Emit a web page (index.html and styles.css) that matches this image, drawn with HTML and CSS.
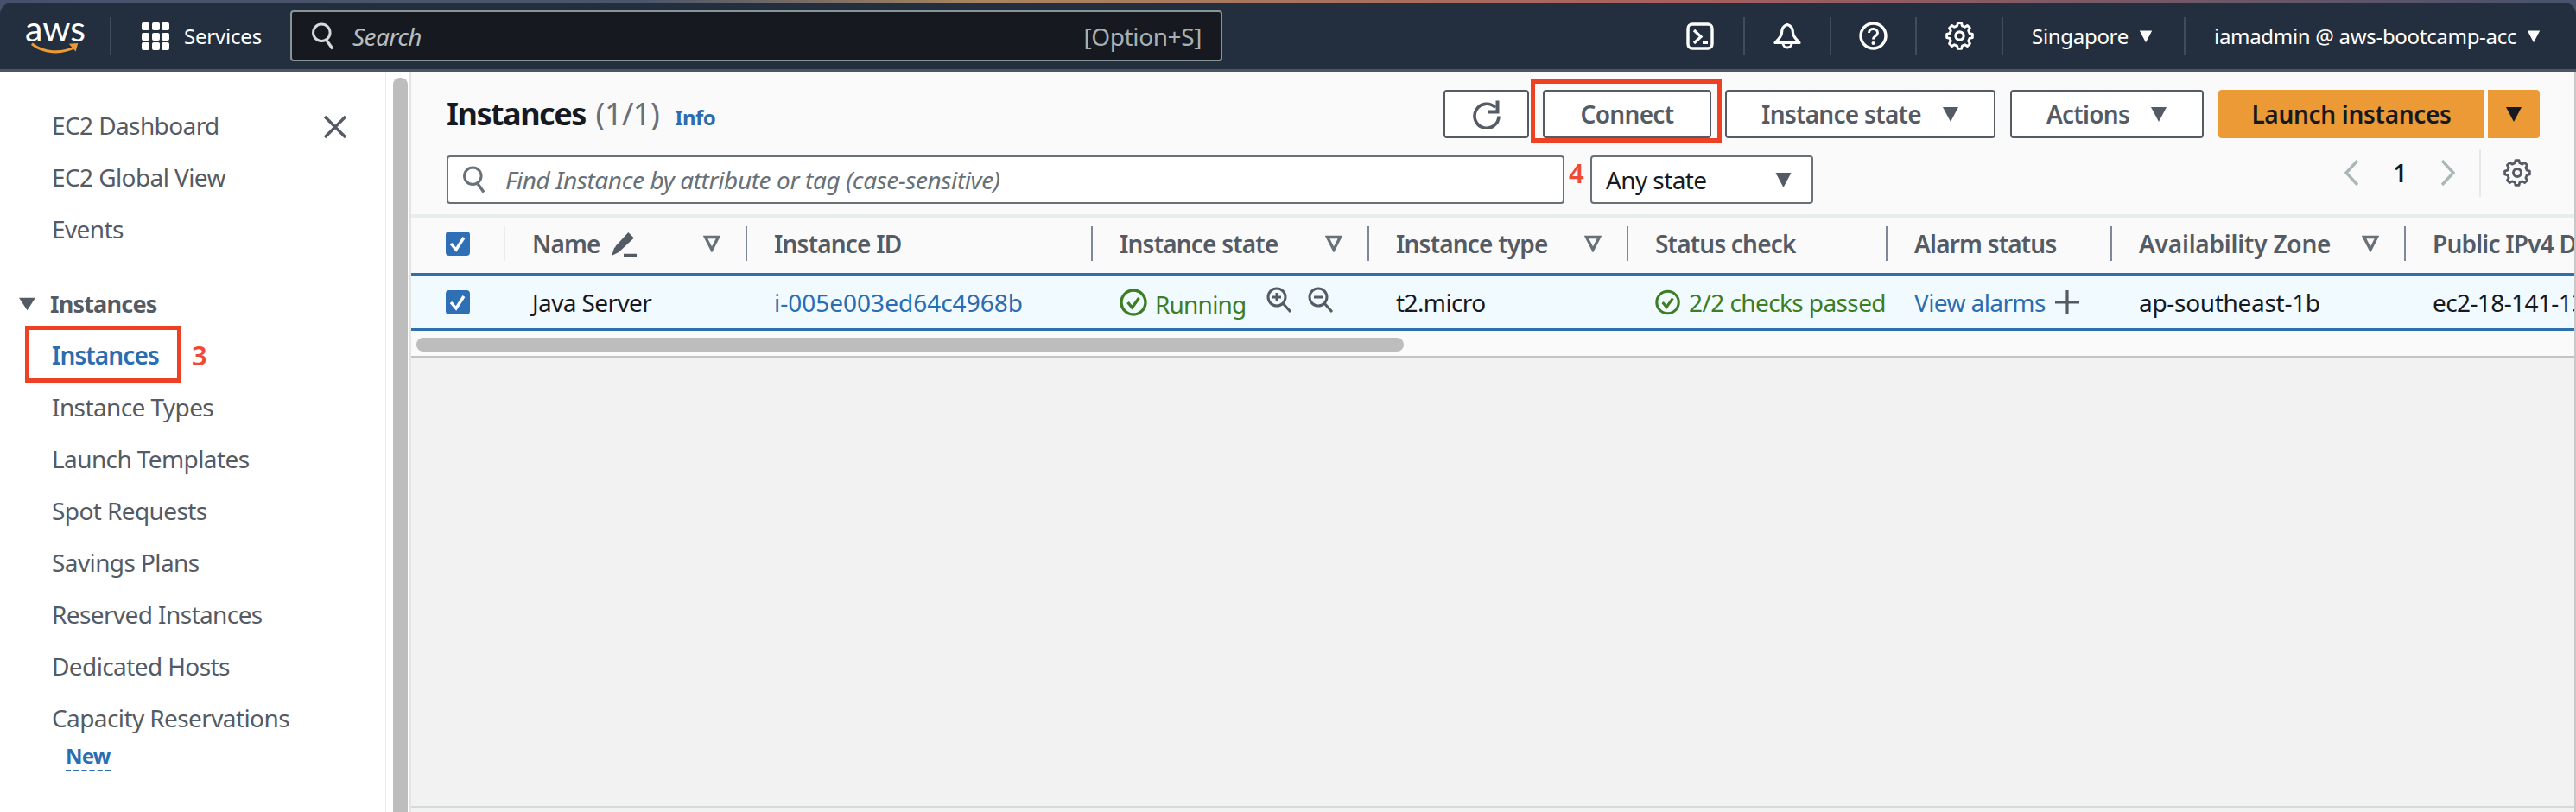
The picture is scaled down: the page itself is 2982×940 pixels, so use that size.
FILE: index.html
```html
<!DOCTYPE html>
<html lang="en">
<head>
    <meta charset="UTF-8">
    <title>Instances | EC2 Management Console</title>
    <link rel="stylesheet" href="styles.css">
</head>
<body>
    <svg class="defs" width="0" height="0">
        <symbol id="i-search" viewBox="0 0 32 40">
            <circle cx="14" cy="15" r="11.5" fill="none" stroke="currentColor" stroke-width="3.5"/>
            <path d="M21 26l8 11" fill="none" stroke="currentColor" stroke-width="4"/>
        </symbol>
        <symbol id="i-gear" viewBox="0 0 32 32">
            <path d="M13.2 4.800L14 1.600H18L18.800 4.800L21.900 6.100L24.700 4.400L27.600 7.300L25.900 10.100L27.200 13.200L30.400 14V18L27.200 18.800L25.900 21.900L27.600 24.700L24.700 27.600L21.900 25.900L18.800 27.200L18 30.400H14L13.200 27.200L10.100 25.900L7.300 27.600L4.400 24.700L6.100 21.900L4.800 18.800L1.600 18V14L4.800 13.200L6.100 10.100L4.400 7.300L7.300 4.400L10.100 6.100Z" fill="none" stroke="currentColor" stroke-width="2.800" stroke-linejoin="round"/>
            <circle cx="16" cy="16" r="4.500" fill="none" stroke="currentColor" stroke-width="3"/>
        </symbol>
        <symbol id="i-caret" viewBox="0 0 20 20"><path d="M1 2h18L10 19z" fill="currentColor"/></symbol>
        <symbol id="i-filter" viewBox="0 0 20 20"><path d="M2.500 2.500h15L10 17z" fill="none" stroke="currentColor" stroke-width="3.400"/></symbol>
        <symbol id="i-check" viewBox="0 0 28 28">
            <rect width="28" height="28" rx="4" fill="#2f6fb5"/>
            <path d="M6 14l6 7 9-14" fill="none" stroke="#fff" stroke-width="3.400"/>
        </symbol>
        <symbol id="i-ok" viewBox="0 0 32 32">
            <circle cx="16" cy="16" r="14" fill="none" stroke="currentColor" stroke-width="3.400"/>
            <path d="M9.500 16l5 6 8-11" fill="none" stroke="currentColor" stroke-width="3.400"/>
        </symbol>
    </svg>

    <header class="topbar">
        <a class="logo">
            <span class="logo-text">aws</span>
            <svg class="logo-smile" width="64" height="16" viewBox="0 0 64 16">
                <path d="M1 2c15 12 38 14 58 4" fill="none" stroke="#ec9a36" stroke-width="3.500"/>
                <path d="M50 2l12-1-3 11z" fill="#ec9a36"/>
            </svg>
        </a>
        <span class="nav-sep sep-logo"></span>
        <svg class="grid-icon" width="32" height="32" viewBox="0 0 32 32" fill="#fff">
            <rect x="0" y="0" width="9" height="9" rx="2"/><rect x="12" y="0" width="9" height="9" rx="2"/><rect x="23" y="0" width="9" height="9" rx="2"/>
            <rect x="0" y="12" width="9" height="9" rx="2"/><rect x="12" y="12" width="9" height="9" rx="2"/><rect x="23" y="12" width="9" height="9" rx="2"/>
            <rect x="0" y="23" width="9" height="9" rx="2"/><rect x="12" y="23" width="9" height="9" rx="2"/><rect x="23" y="23" width="9" height="9" rx="2"/>
        </svg>
        <span class="services">Services</span>
        <div class="global-search">
            <svg class="search-icon" width="28" height="34"><use href="#i-search"/></svg>
            <span class="search-hint">Search</span>
            <span class="search-key">[Option+S]</span>
        </div>
        <div class="nav-right">
            <span class="nav-btn btn-shell">
                <svg width="32" height="32" viewBox="0 0 32 32">
                    <rect x="2" y="2" width="28" height="28" rx="5" fill="none" stroke="#fff" stroke-width="3.400"/>
                    <path d="M9 9l8 7.500-8 7.500M19 23.500h6" fill="none" stroke="#fff" stroke-width="3.200"/>
                </svg>
            </span>
            <span class="nav-sep"></span>
            <span class="nav-btn btn-bell">
                <svg width="32" height="32" viewBox="0 0 32 32">
                    <path d="M16 2.500C11 4 9.500 8 9.500 12C9.500 16 6 19 2 23.500H30C26 19 22.500 16 22.500 12C22.500 8 21 4 16 2.500Z" fill="none" stroke="#fff" stroke-width="3.200" stroke-linejoin="round"/>
                    <path d="M11 24a5 5 0 0 0 10 0" fill="none" stroke="#fff" stroke-width="3"/>
                </svg>
            </span>
            <span class="nav-sep"></span>
            <span class="nav-btn btn-help">
                <svg width="33" height="33" viewBox="0 0 33 33">
                    <circle cx="16.500" cy="16.500" r="14.500" fill="none" stroke="#fff" stroke-width="3.400"/>
                    <path d="M11.500 13c0-6 10-6 10 0 0 4-5 3.500-5 7.500" fill="none" stroke="#fff" stroke-width="3"/>
                    <circle cx="16.500" cy="25" r="2" fill="#fff"/>
                </svg>
            </span>
            <span class="nav-sep"></span>
            <span class="nav-btn btn-gear">
                <svg width="33" height="33"><use href="#i-gear"/></svg>
            </span>
            <span class="nav-sep"></span>
            <span class="nav-menu menu-region">Singapore <svg width="16" height="16"><use href="#i-caret"/></svg></span>
            <span class="nav-sep"></span>
            <span class="nav-menu menu-user">iamadmin @ aws-bootcamp-acc <svg width="16" height="16"><use href="#i-caret"/></svg></span>
        </div>
    </header>

    <div class="layout">
        <aside class="sidebar">
            <svg class="side-close" width="28" height="28" viewBox="0 0 28 28">
                <path d="M2 2l24 24M26 2L2 26" fill="none" stroke="#545b64" stroke-width="3.400"/>
            </svg>
            <ul class="side-list">
                <li>EC2 Dashboard</li>
                <li>EC2 Global View</li>
                <li>Events</li>
            </ul>
            <div class="side-group">
                <svg width="21" height="17" viewBox="0 0 20 20" preserveAspectRatio="none"><use href="#i-caret"/></svg>
                <span>Instances</span>
            </div>
            <ul class="side-list">
                <li class="active">Instances<span class="annot-box side-box"></span><span class="annot-num side-num">3</span></li>
                <li>Instance Types</li>
                <li>Launch Templates</li>
                <li>Spot Requests</li>
                <li>Savings Plans</li>
                <li>Reserved Instances</li>
                <li>Dedicated Hosts</li>
                <li>Capacity Reservations</li>
            </ul>
            <span class="side-new">New</span>
        </aside>
        <div class="side-scroll"><div class="side-thumb"></div></div>

        <main class="content">
            <section class="panel">
                <div class="panel-top">
                    <h1 class="title">Instances <span class="count">(1/1)</span> <a class="info">Info</a></h1>
                    <div class="actions">
                        <button class="btn btn-refresh">
                            <svg width="34" height="34" viewBox="0 0 34 34">
                                <path d="M27 9.500a14 14 0 1 0 4 10" fill="none" stroke="#545b64" stroke-width="3.600"/>
                                <path d="M31.500 1.500v15h-13v-4h9v-11z" fill="#545b64"/>
                            </svg>
                        </button>
                        <div class="connect-wrap">
                            <button class="btn btn-connect">Connect</button>
                            <span class="annot-box connect-box"></span>
                        </div>
                        <button class="btn btn-state">Instance state <svg width="20" height="20"><use href="#i-caret"/></svg></button>
                        <button class="btn btn-actions">Actions <svg width="20" height="20"><use href="#i-caret"/></svg></button>
                        <div class="launch">
                            <button class="btn btn-launch">Launch instances</button>
                            <button class="btn btn-launch-more"><svg width="20" height="20"><use href="#i-caret"/></svg></button>
                        </div>
                    </div>
                </div>
                <div class="panel-filter">
                    <div class="filter-input">
                        <svg class="search-icon" width="28" height="34"><use href="#i-search"/></svg>
                        <span>Find Instance by attribute or tag (case-sensitive)</span>
                        <span class="annot-num filter-num">4</span>
                    </div>
                    <div class="state-select">Any state <svg class="select-caret" width="21" height="20"><use href="#i-caret"/></svg></div>
                    <div class="pager">
                        <svg width="18" height="30" viewBox="0 0 18 30"><path d="M16 1L3 15l13 14" fill="none" stroke="#aab7b8" stroke-width="3.400"/></svg>
                        <span class="page-num">1</span>
                        <svg width="18" height="30" viewBox="0 0 18 30"><path d="M2 1l13 14L2 29" fill="none" stroke="#aab7b8" stroke-width="3.400"/></svg>
                        <span class="pager-sep"></span>
                        <svg class="pager-gear" width="32" height="32"><use href="#i-gear"/></svg>
                    </div>
                </div>
            </section>

            <section class="table">
                <div class="tr thead">
                    <div class="th th-check"><svg width="28" height="28"><use href="#i-check"/></svg></div>
                    <div class="th th-first"><span class="th-name">Name
                        <svg width="30" height="30" viewBox="0 0 28 28"><path d="M4 23l2-6L19 3l5 5L10 21z" fill="#545b64" stroke="#545b64" stroke-width="1.500"/><path d="M1 27l3-9 5 5zM14 25h14v3H14z" fill="#545b64"/></svg></span>
                        <svg class="filter" width="20" height="20"><use href="#i-filter"/></svg></div>
                    <div class="th">Instance ID</div>
                    <div class="th">Instance state<svg class="filter" width="20" height="20"><use href="#i-filter"/></svg></div>
                    <div class="th">Instance type<svg class="filter" width="20" height="20"><use href="#i-filter"/></svg></div>
                    <div class="th">Status check</div>
                    <div class="th">Alarm status</div>
                    <div class="th th-zone">Availability Zone<svg class="filter" width="20" height="20"><use href="#i-filter"/></svg></div>
                    <div class="th">Public IPv4 DNS</div>
                </div>
                <div class="tr tbody">
                    <div class="td td-check"><svg width="28" height="28"><use href="#i-check"/></svg></div>
                    <div class="td">Java Server</div>
                    <div class="td link td-id">i-005e003ed64c4968b</div>
                    <div class="td green td-state">
                        <svg width="32" height="32"><use href="#i-ok"/></svg>
                        <span class="running">Running</span>
                        <svg class="zoom-icon zoom-in" width="30" height="30" viewBox="0 0 30 30">
                            <circle cx="12" cy="12" r="10" fill="none" stroke="#545b64" stroke-width="3"/>
                            <path d="M19 19l9 10M7 12h10M12 7v10" fill="none" stroke="#545b64" stroke-width="3"/>
                        </svg>
                        <svg class="zoom-icon" width="30" height="30" viewBox="0 0 30 30">
                            <circle cx="12" cy="12" r="10" fill="none" stroke="#545b64" stroke-width="3"/>
                            <path d="M19 19l9 10M7 12h10" fill="none" stroke="#545b64" stroke-width="3"/>
                        </svg>
                    </div>
                    <div class="td">t2.micro</div>
                    <div class="td green td-status"><svg width="32" height="32"><use href="#i-ok"/></svg><span>2/2 checks passed</span></div>
                    <div class="td link td-alarm">View alarms
                        <svg width="28" height="28" viewBox="0 0 28 28"><path d="M14 0v28M0 14h28" stroke="#545b64" stroke-width="3.200"/></svg></div>
                    <div class="td td-zone">ap-southeast-1b</div>
                    <div class="td">ec2-18-141-132-59.ap-southeast-1</div>
                </div>
                <div class="hscroll"><div class="hthumb"></div></div>
            </section>

            <div class="empty"></div>
        </main>
    </div>
</body>
</html>
```

FILE: styles.css
```css
/* Reset CSS */
* {
    margin: 0;
    padding: 0;
    box-sizing: border-box;
}

html, body {
    width: 2982px;
    height: 940px;
    overflow: hidden;
}

body {
    font-family: 'Noto Sans', sans-serif;
    font-size: 28px;
    letter-spacing: -0.6px;
    color: #16191f;
    padding-top: 3px;
    background: #fff linear-gradient(90deg, #46526c 0, #4c566a 25%, #a88560 38%, #a8605f 65%, #46526c 100%) no-repeat top / 100% 40px;
    display: flex;
    flex-direction: column;
}

.defs {
    position: absolute;
}

/* Top bar */
.topbar {
    height: 80px;
    flex: none;
    display: flex;
    align-items: center;
    background-color: #232f3e;
    border-bottom: 3px solid #4d5560;
    border-radius: 14px 14px 0 0;
    color: #fff;
}

.logo {
    width: 62px;
    margin-left: 33px;
    display: flex;
    flex-direction: column;
    align-items: center;
    position: relative;
    height: 42px;
}

.logo-text {
    font-family: 'Lato', sans-serif;
    font-size: 41px;
    line-height: 28px;
    letter-spacing: 0;
    margin-top: -2px;
}

.logo-smile {
    width: 62px;
    margin-top: 2px;
}

.nav-sep {
    width: 2px;
    height: 44px;
    background-color: #414c59;
    flex: none;
}

.sep-logo {
    margin-left: 32px;
}

.grid-icon {
    margin-left: 35px;
    flex: none;
}

.services {
    margin-left: 17px;
    width: 123px;
    font-size: 24px;
    letter-spacing: -0.2px;
}

.global-search {
    width: 1079px;
    height: 59px;
    display: flex;
    align-items: center;
    padding: 0 22px 0 22px;
    background-color: #16191f;
    border: 2px solid #879596;
    border-radius: 4px;
    color: #b7bdc0;
}

.search-icon {
    flex: none;
    color: #687078;
}

.global-search .search-icon {
    color: #d5dbdb;
}

.search-hint {
    margin-left: 20px;
    font-style: italic;
    flex: 1;
}

.search-key {
    color: #a9b0b3;
    letter-spacing: -0.4px;
}

.nav-right {
    flex: 1;
    display: flex;
    align-items: center;
    font-size: 24px;
    letter-spacing: -0.3px;
}

.nav-btn {
    display: flex;
    align-items: center;
}

.btn-shell {
    margin-left: 537px;
    margin-right: 34px;
}

.btn-bell {
    margin-left: 33px;
    margin-right: 33px;
}

.btn-help {
    margin-left: 32px;
    margin-right: 32px;
}

.btn-gear {
    margin-left: 33px;
    margin-right: 32px;
}

.nav-menu {
    display: flex;
    align-items: center;
    gap: 12px;
    white-space: nowrap;
}

.menu-region {
    margin-left: 33px;
    margin-right: 36px;
}

.menu-user {
    margin-left: 33px;
}

/* Side navigation */
.layout {
    flex: 1;
    display: flex;
    min-height: 0;
}

.sidebar {
    width: 446px;
    flex: none;
    padding-top: 33px;
    position: relative;
    background-color: #fff;
    color: #545b64;
}

.side-close {
    position: absolute;
    left: 374px;
    top: 50px;
}

.side-list {
    list-style: none;
}

.side-list li {
    height: 60px;
    line-height: 59px;
    margin-left: 60px;
    position: relative;
    white-space: nowrap;
}

.side-list li.active {
    color: #2a6db0;
    font-weight: 600;
    letter-spacing: -0.9px;
}

.side-group {
    margin-top: 24px;
    height: 62px;
    display: flex;
    align-items: center;
    gap: 16px;
    padding-left: 21px;
    font-weight: 700;
    font-size: 27px;
    letter-spacing: -0.8px;
}

.side-new {
    display: block;
    width: fit-content;
    margin-left: 76px;
    margin-top: -3px;
    font-size: 24px;
    line-height: 32px;
    font-weight: 700;
    letter-spacing: -0.8px;
    color: #2a6db0;
    border-bottom: 2px dashed #2a6db0;
}

/* Red marks painted on top of the screenshot */
.annot-box {
    position: absolute;
    border: 5px solid #ee4023;
}

.annot-num {
    position: absolute;
    color: #ef4a36;
    font-family: 'Noto Sans', sans-serif;
    font-weight: 600;
    letter-spacing: 0;
}

.side-box {
    left: -31px;
    top: -5px;
    width: 181px;
    height: 66px;
}

.side-num {
    left: 162px;
    top: 0;
    font-size: 31px;
}

.connect-box {
    left: -14px;
    top: -12px;
    width: 221px;
    height: 73px;
}

.filter-num {
    left: 1297px;
    top: -7px;
    font-size: 31px;
    line-height: 50px;
    font-style: normal;
}

.side-scroll {
    width: 30px;
    flex: none;
    padding: 7px 5px 0 8px;
    background-color: #fff;
    border-left: 1px solid #ececec;
    border-right: 2px solid #e4e4e4;
}

.side-thumb {
    width: 17px;
    height: 100%;
    background-color: #bdbdbd;
    border-radius: 8px 8px 0 0;
}

/* Main area */
.content {
    flex: 1;
    min-width: 0;
    display: flex;
    flex-direction: column;
    background-color: #f2f2f2;
    border-right: 2px solid #c9c9c9;
}

.panel {
    height: 169px;
    flex: none;
    padding: 21px 40px 0 41px;
    background-color: #fafafa;
    border-bottom: 4px solid #eaeded;
}

.panel-top {
    display: flex;
    justify-content: space-between;
    height: 56px;
}

.title {
    font-size: 36px;
    font-weight: 700;
    line-height: 56px;
    letter-spacing: -1.5px;
    white-space: nowrap;
}

.count {
    font-weight: 400;
    color: #687078;
    margin-left: 4px;
    letter-spacing: -0.5px;
}

.info {
    font-size: 24px;
    color: #2a6db0;
    margin-left: 10px;
    letter-spacing: -0.5px;
}

.actions {
    display: flex;
    gap: 16px;
}

.btn {
    height: 56px;
    display: flex;
    align-items: center;
    justify-content: center;
    font-family: inherit;
    font-size: 28px;
    font-weight: 600;
    letter-spacing: -0.7px;
    color: #545b64;
    background-color: #fff;
    border: 2px solid #545b64;
    border-radius: 4px;
}

.btn-refresh {
    width: 99px;
}

.connect-wrap {
    position: relative;
}

.btn-connect {
    width: 195px;
}

.btn-state {
    width: 313px;
    gap: 24px;
}

.btn-actions {
    width: 224px;
    gap: 24px;
    margin-left: 1px;
}

.launch {
    display: flex;
    gap: 4px;
    margin-left: 1px;
}

.btn-launch,
.btn-launch-more {
    background-color: #ec9a36;
    border: none;
    color: #16191f;
}

.btn-launch {
    width: 308px;
    letter-spacing: -0.3px;
    border-radius: 4px 0 0 4px;
}

.btn-launch-more {
    width: 60px;
    border-radius: 0 4px 4px 0;
}

.panel-filter {
    display: flex;
    margin-top: 20px;
    position: relative;
}

.filter-input {
    width: 1294px;
    height: 56px;
    display: flex;
    align-items: center;
    gap: 22px;
    padding-left: 16px;
    position: relative;
    background-color: #fff;
    border: 2px solid #687078;
    border-radius: 4px;
    color: #687078;
    font-style: italic;
    letter-spacing: -0.4px;
}

.state-select {
    width: 258px;
    height: 56px;
    margin-left: 30px;
    padding: 0 22px 0 16px;
    display: flex;
    align-items: center;
    justify-content: space-between;
    background-color: #fff;
    border: 2px solid #687078;
    border-radius: 4px;
}

.select-caret {
    color: #545b64;
}

.pager {
    position: absolute;
    right: 0;
    top: -8px;
    height: 56px;
    display: flex;
    align-items: center;
}

.page-num {
    width: 94px;
    text-align: center;
    font-weight: 600;
}

.pager-sep {
    width: 2px;
    height: 56px;
    margin: 0 26px 0 27px;
    background-color: #e5e8e8;
}

.pager-gear {
    color: #545b64;
    margin-right: 10px;
}

/* Instances table */
.table {
    flex: none;
    background-color: #fafafa;
    border-bottom: 2px solid #c4c4c4;
    overflow: hidden;
}

.tr {
    display: grid;
    grid-template-columns: 107px 280px 400px 320px 300px 300px 260px 340px 300px;
    align-items: center;
}

.thead {
    height: 64px;
    padding-bottom: 4px;
}

.th {
    height: 40px;
    display: flex;
    align-items: center;
    justify-content: space-between;
    padding: 0 29px 0 31px;
    border-left: 2px solid #7d8998;
    font-weight: 600;
    letter-spacing: -0.8px;
    color: #545b64;
    white-space: nowrap;
}

.th-check {
    padding-left: 40px;
    border-left: none;
}

.th-first {
    border-left-color: #eaeded;
}

.th-zone {
    letter-spacing: -0.2px;
}

.th-name {
    display: flex;
    align-items: center;
    gap: 12px;
}

.filter {
    color: #687078;
    flex: none;
}

.tbody {
    height: 67px;
    background-color: #f1faff;
    border-top: 3px solid #2f6fae;
    border-bottom: 3px solid #2f6fae;
}

.td {
    padding-left: 33px;
    white-space: nowrap;
    overflow: hidden;
    display: flex;
    align-items: center;
}

.td-check {
    padding-left: 40px;
}

.td-id {
    letter-spacing: 0;
}

.td-zone {
    letter-spacing: -0.3px;
}

.link {
    color: #2a6db0;
}

.green {
    color: #3d7d24;
}

.td-state {
    gap: 9px;
}

.running {
    margin-top: 4px;
    letter-spacing: -0.8px;
}

.zoom-icon {
    margin-top: -6px;
    margin-left: 9px;
}

.zoom-in {
    margin-left: 15px;
}

.td-status {
    gap: 10px;
}

.td-alarm {
    gap: 11px;
}

.hscroll {
    height: 29px;
    padding: 8px 0 0 6px;
}

.hthumb {
    width: 1143px;
    height: 16px;
    background-color: #bdbdbd;
    border-radius: 8px;
}

.empty {
    flex: 1;
    margin-bottom: 5px;
    border-bottom: 2px solid #d5dbdb;
}
```
